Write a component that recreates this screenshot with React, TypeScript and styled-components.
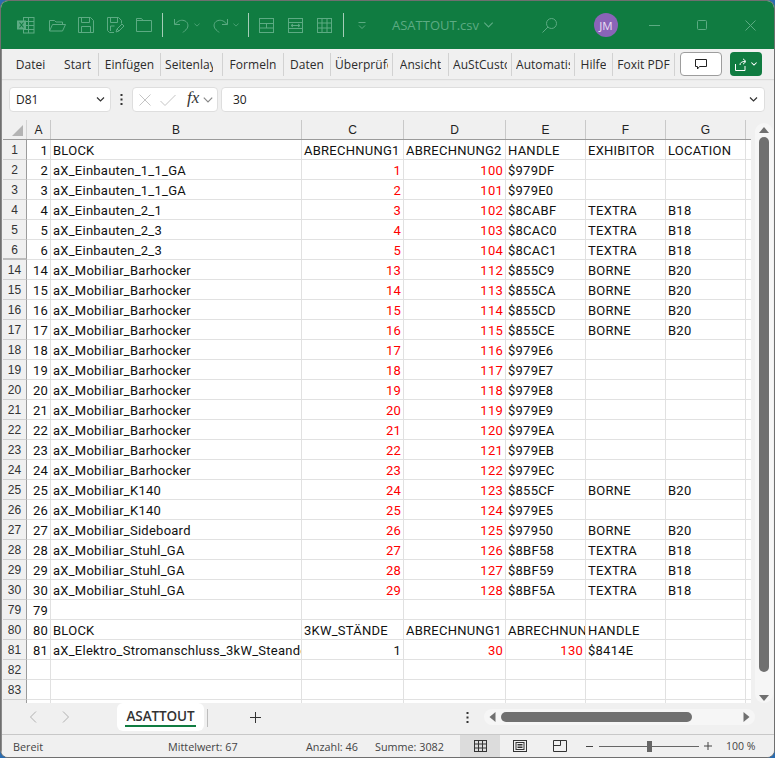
import React from "react";
import styled, { createGlobalStyle } from "styled-components";

const Global = createGlobalStyle`
  html, body { margin: 0; padding: 0; width: 775px; height: 758px; overflow: hidden; background: #2a6cb0; }
  * { box-sizing: border-box; }
`;

const Window = styled.div`
  width: 775px; height: 758px; display: flex; flex-direction: column; overflow: hidden; position: relative;
  background: #f0f0f0; border: 1px solid #6f6f6f; border-radius: 8px;
  font-family: "Open Sans", "Noto Sans", sans-serif; color: #222;
  &::after { content: ""; position: absolute; left: 0; top: 48px; bottom: 0; width: 1px; background: #8a8a8a; }
`;
const TitleBar = styled.div`
  height: 48px; flex: none; background: #107c41; display: flex; align-items: center; padding-left: 16px; position: relative;
`;
const Qat = styled.div`display: flex; align-items: center; color: #5cab83;`;
const QatSlot = styled.div<{ $w: number; $l?: number }>`
  width: ${p => p.$w}px; padding-left: ${p => p.$l ?? 0}px; display: flex; align-items: center; justify-content: flex-start;
`;
const QatSep = styled.div<{ $m?: number }>`width: 1px; height: 24px; background: #a5cdb8; margin-right: ${p => p.$m ?? 11}px;`;
const FileName = styled.div`
  font-size: 13px; color: #5cab83; margin-left: 23px; display: flex; align-items: center; gap: 4px; white-space: nowrap;
`;
const TitleRight = styled.div`margin-left: auto; display: flex; align-items: center; color: #5cab83; height: 100%;`;
const Avatar = styled.div`
  width: 24px; height: 24px; border-radius: 50%; background: #8a64b8; color: #e8dff3; font-size: 11.5px;
  display: flex; align-items: center; justify-content: center; margin: 0 12px 0 37px;
`;
const WinBtn = styled.div`width: 48px; display: flex; justify-content: center; align-items: center;`;

const RibbonBar = styled.div`
  height: 30px; flex: none; background: #f0f0f0; display: flex; align-items: center; padding-left: 3px;
  box-shadow: 0 1px 1px #dcdcdc; position: relative;
`;
const RibTab = styled.div<{ $w: number; $sep?: boolean }>`
  width: ${p => p.$w}px; height: 23px; flex: none; font-size: 12px; line-height: 23px; white-space: nowrap;
  border-right: ${p => (p.$sep ? "1px solid #d2d2d2" : "none")}; padding: 0 4px; color: #2b2b2b;
  display: flex; justify-content: center; letter-spacing: .05px;
`;
const RibLabel = styled.span<{ $clip?: number }>`
  display: block; overflow: hidden; flex: none; ${p => (p.$clip ? `width: ${p.$clip}px; margin-right: auto;` : "")}
`;
const CommentBtn = styled.div`
  width: 42px; height: 24px; margin-left: 5px; background: #fff; border: 1px solid #9d9d9d; border-radius: 4px;
  display: flex; align-items: center; justify-content: center; color: #222;
`;
const ShareBtn = styled.div`
  width: 32px; height: 24px; margin-left: 8px; background: #107c41; border-radius: 4px; color: #fff;
  display: flex; align-items: center; justify-content: center; gap: 3px;
`;

const FormulaBar = styled.div`
  height: 41px; flex: none; background: #f0f0f0; display: flex; align-items: center; padding: 0 9px 0 8px;
`;
const Box = styled.div`
  height: 25px; background: #fff; border: 1px solid #dedede; border-radius: 4px; display: flex; align-items: center;
`;
const NameBox = styled(Box)`width: 102px; padding: 0 5px 0 6px; justify-content: space-between; font-size: 12px; color: #222;`;
const Dots = styled.div`width: 21px; display: flex; justify-content: center; color: #333;`;
const FnBox = styled(Box)`width: 86px; padding: 0 2px 0 6px; gap: 9px; color: #c4c4c4;`;
const Fx = styled.span`font-family: "Liberation Serif", serif; font-style: italic; font-size: 17px; color: #333; margin-left: 2px; margin-top: -3px; margin-right: -5px;`;
const ValueBox = styled(Box)`flex: 1; margin-left: 3px; padding: 0 6px 0 11px; justify-content: space-between; font-size: 12px; color: #222;`;

const SheetArea = styled.div`flex: 1; min-height: 0; display: flex; background: #fff;`;
const GridWrap = styled.div`flex: 1; min-width: 0; overflow: hidden; padding-left: 2px; background: linear-gradient(90deg,#f0f0f0 2px,#fff 2px);`;
const HeaderRow = styled.div`display: flex; height: 20px; background: #f0f0f0; border-bottom: 1px solid #9b9b9b;`;
const Corner = styled.div`
  width: 24px; flex: none; border-right: 1px solid #d4d4d4; display: flex; align-items: flex-end; justify-content: flex-end; padding: 0 3px 3px 0;
`;
const ColHead = styled.div<{ $w: number }>`
  width: ${p => p.$w}px; flex: none; text-align: center; border-right: 1px solid #c9c9c9; font: 12px/20px "Liberation Sans", sans-serif; color: #222;
`;
const Row = styled.div`display: flex; height: 20px;`;
const RowHead = styled.div<{ $thick?: boolean }>`
  width: 24px; flex: none; background: #f0f0f0; text-align: center; font: 12px/21px "Liberation Sans", sans-serif; color: #333;
  border-right: 1px solid #9b9b9b; border-bottom: ${p => (p.$thick ? "2px solid #bdbdbd" : "1px solid #d0d0d0")};
`;
const Cell = styled.div<{ $w: number; $right?: boolean; $red?: boolean }>`
  width: ${p => p.$w}px; flex: none; overflow: hidden; white-space: nowrap; padding: 0 2px 0 2px;
  font: 13px/21px "Roboto", sans-serif; letter-spacing: .25px;
  text-align: ${p => (p.$right ? "right" : "left")}; color: ${p => (p.$red ? "#ff0000" : "#111")};
  border-right: 1px solid #e1e1e1; border-bottom: 1px solid #e1e1e1;
`;

const VScroll = styled.div`
  width: 23px; flex: none; background: #f0f0f0; display: flex; flex-direction: column; align-items: center; padding: 3px 0 0 2px;
`;
const VTrack = styled.div`
  width: 18px; height: 580px; background: #f6f6f6; border-radius: 9px; display: flex; flex-direction: column; align-items: center; padding-top: 4px;
`;
const VThumb = styled.div`width: 10px; height: 535px; margin-top: 4px; background: #707070; border-radius: 5px; flex: none;`;
const ArrowSpacer = styled.div`flex: 1;`;

const TabBar = styled.div`height: 32px; flex: none; background: #f0f0f0; display: flex; align-items: flex-start; border-bottom: 1px solid #c8c8c8;`;
const NavArrows = styled.div`width: 116px; height: 28px; padding-left: 28px; display: flex; align-items: center; gap: 25px; color: #b0b0b0;`;
const SheetTab = styled.div`
  width: 87px; height: 28px; background: #fff; border-radius: 6px; font-size: 13.5px; font-weight: 600; color: #333; text-align: center; line-height: 26px; position: relative; letter-spacing: -.1px;
`;
const TabLine = styled.div`position: absolute; left: 8px; right: 8px; bottom: 4px; height: 2px; background: #107c41;`;
const TabSep = styled.div`width: 1px; height: 18px; margin: 6px 0 0 3px; background: #bdbdbd;`;
const PlusWrap = styled.div`width: 97px; height: 28px; padding-left: 42px; display: flex; align-items: center; color: #333;`;
const MoreDots = styled.div`width: 18px; height: 28px; margin-left: 161px; display: flex; align-items: center; color: #333;`;
const HTrack = styled.div`
  width: 271px; height: 16px; margin-top: 6px; background: #f6f6f6; border-radius: 8px; display: flex; align-items: center; padding: 0 4px; color: #707070;
`;
const HThumb = styled.div`width: 191px; height: 10px; margin-left: 5px; background: #707070; border-radius: 5px;`;

const StatusBar = styled.div`height: 22px; flex: none; background: #f0f0f0; display: flex; align-items: center; font-size: 10.8px; color: #444;`;
const StatusText = styled.div<{ $w: number; $l?: number }>`width: ${p => p.$w}px; margin-left: ${p => p.$l ?? 0}px; white-space: nowrap;`;
const ViewBtn = styled.div<{ $on?: boolean }>`
  width: 40px; height: 100%; display: flex; align-items: center; justify-content: center; background: ${p => (p.$on ? "#dcdcdc" : "transparent")}; color: #333;
`;
const Zoom = styled.div`display: flex; align-items: center; margin-left: 6px; color: #444;`;
const Slider = styled.div`width: 100px; height: 1px; background: #666; margin: 0 5px 0 6px; position: relative;`;
const Knob = styled.div`position: absolute; left: 48px; top: -5px; width: 5px; height: 11px; background: #666;`;
const ZoomPct = styled.div`margin-left: 14px; white-space: nowrap; font-size: 10.5px;`;

const S = { fill: "none", stroke: "currentColor", strokeWidth: 1 } as const;
const Ico = ({ w = 16, h = 16, vb, children }: { w?: number; h?: number; vb?: string; children: React.ReactNode }) => (
  <svg width={w} height={h} viewBox={vb ?? `0 0 ${w} ${h}`} {...S} style={{ display: "block" }}>{children}</svg>
);
const Caret = ({ c = "currentColor", w = 8, h = 5, sw = 1 }: { c?: string; w?: number; h?: number; sw?: number }) => (
  <svg width={w} height={h} viewBox="0 0 8 5" fill="none" stroke={c} strokeWidth={sw} style={{ display: "block" }}><path d="M.5.5 4 4 7.5.5" /></svg>
);

const XlIcon = () => (
  <Ico w={18} h={17}>
    <rect x="6.5" y=".5" width="10.5" height="15.5" /><path d="M11.5.5v15.5M6.5 4.5H17M6.5 8.5H17M6.5 12.5H17" />
    <rect x="0" y="3.5" width="9" height="9" fill="#5cab83" stroke="none" />
    <path d="M2.5 5.5 6.5 10.5M6.5 5.5l-4 5" stroke="#107c41" strokeWidth="1.2" />
  </Ico>
);
const OpenIcon = () => (<Ico w={17} h={13}><path d="M.5 12V1.5h5l1.5 1.5h6.5v2.5M.5 12l3-6.5h13l-3 6.5z" /></Ico>);
const SaveIcon = () => (<Ico w={16} h={16}><path d="M.5.5h12l3 3v12H.5zM3.5.5v5h8v-5M3.5 15.500v-6h9v6" /></Ico>);
const SaveEditIcon = () => (<Ico w={17} h={16}><path d="M7 15.500H2.500l-2-2v-13h11l3 3v3M3.500.5v5h7v-5M3.500 14v-5h4" /><path d="M9 15l1-3 5-5 2 2-5 5zM10 12l2 2" /></Ico>);
const FolderIcon = () => (<Ico w={16} h={14}><path d="M.5 13.500V.5h5l1.500 2h8.500v11zM.5 2.500h6.500" /></Ico>);
const UndoIcon = () => (<Ico w={15} h={15}><path d="M.5 1v5.500H6" /><path d="M.8 6.500 4 3.500c3-2 7-1.500 9 1 2 3 .5 6.500-2 8l-2 2" /></Ico>);
const RedoIcon = () => (<Ico w={15} h={15}><path d="M14.500 1v5.500H9" /><path d="M14.200 6.500 11 3.500c-3-2-7-1.500-9 1-2 3-.5 6.500 2 8l2 2" /></Ico>);
const TblA = () => (<Ico w={15} h={15}><rect x=".5" y=".5" width="14" height="14" /><path d="M.5 5.500h14M.5 10h14M7.500 5.500V10" /></Ico>);
const TblB = () => (<Ico w={15} h={15}><rect x=".5" y=".5" width="14" height="14" /><path d="M.5 4.500h14M.5 10.500h14M3 7.500h9M3 7.500l2-1.500M3 7.500l2 1.500M12 7.500l-2-1.500M12 7.500l-2 1.500" /></Ico>);
const TblC = () => (<Ico w={15} h={15}><rect x=".5" y=".5" width="14" height="14" /><path d="M.5 5h14M.5 10h14M5 .5V5M10 .5V5M5 5v5M10 5v5M5 10v4.500M10 10v4.500" /></Ico>);
const Customize = () => (<Ico w={8} h={7}><path d="M.5.5h7M1 3.500l3 3 3-3" /></Ico>);
const Search = () => (<Ico w={15} h={15}><circle cx="9.500" cy="5.500" r="5" /><path d="M6 9 .5 14.500" /></Ico>);

const cols = [24, 251, 102, 102, 80, 80, 80, 12];

type D = [number, string, string, string, string, string, string];
const rows: D[] = [
  [1, "BLOCK", "ABRECHNUNG1", "ABRECHNUNG2", "HANDLE", "EXHIBITOR", "LOCATION"],
  [2, "aX_Einbauten_1_1_GA", "1", "100", "$979DF", "", ""],
  [3, "aX_Einbauten_1_1_GA", "2", "101", "$979E0", "", ""],
  [4, "aX_Einbauten_2_1", "3", "102", "$8CABF", "TEXTRA", "B18"],
  [5, "aX_Einbauten_2_3", "4", "103", "$8CAC0", "TEXTRA", "B18"],
  [6, "aX_Einbauten_2_3", "5", "104", "$8CAC1", "TEXTRA", "B18"],
  [14, "aX_Mobiliar_Barhocker", "13", "112", "$855C9", "BORNE", "B20"],
  [15, "aX_Mobiliar_Barhocker", "14", "113", "$855CA", "BORNE", "B20"],
  [16, "aX_Mobiliar_Barhocker", "15", "114", "$855CD", "BORNE", "B20"],
  [17, "aX_Mobiliar_Barhocker", "16", "115", "$855CE", "BORNE", "B20"],
  [18, "aX_Mobiliar_Barhocker", "17", "116", "$979E6", "", ""],
  [19, "aX_Mobiliar_Barhocker", "18", "117", "$979E7", "", ""],
  [20, "aX_Mobiliar_Barhocker", "19", "118", "$979E8", "", ""],
  [21, "aX_Mobiliar_Barhocker", "20", "119", "$979E9", "", ""],
  [22, "aX_Mobiliar_Barhocker", "21", "120", "$979EA", "", ""],
  [23, "aX_Mobiliar_Barhocker", "22", "121", "$979EB", "", ""],
  [24, "aX_Mobiliar_Barhocker", "23", "122", "$979EC", "", ""],
  [25, "aX_Mobiliar_K140", "24", "123", "$855CF", "BORNE", "B20"],
  [26, "aX_Mobiliar_K140", "25", "124", "$979E5", "", ""],
  [27, "aX_Mobiliar_Sideboard", "26", "125", "$97950", "BORNE", "B20"],
  [28, "aX_Mobiliar_Stuhl_GA", "27", "126", "$8BF58", "TEXTRA", "B18"],
  [29, "aX_Mobiliar_Stuhl_GA", "28", "127", "$8BF59", "TEXTRA", "B18"],
  [30, "aX_Mobiliar_Stuhl_GA", "29", "128", "$8BF5A", "TEXTRA", "B18"],
];

const tabs: [string, number, boolean, number?][] = [
  ["Datei", 53, false], ["Start", 42, true], ["Einfügen", 62, true], ["Seitenlayout", 62, true, 48], ["Formeln", 61, true], ["Daten", 47, true],
  ["Überprüfen", 62, true, 53], ["Ansicht", 56, true], ["AuStCustom", 63, true, 54], ["Automatisieren", 63, true, 54], ["Hilfe", 38, true], ["Foxit PDF", 62, true],
];

export default function App() {
  const w = cols;
  return (
    <Window>
      <Global />
      <TitleBar>
        <Qat>
          <QatSlot $w={32}><XlIcon /></QatSlot>
          <QatSlot $w={29}><OpenIcon /></QatSlot>
          <QatSlot $w={29}><SaveIcon /></QatSlot>
          <QatSlot $w={29}><SaveEditIcon /></QatSlot>
          <QatSlot $w={26}><FolderIcon /></QatSlot>
          <QatSep />
          <QatSlot $w={20}><UndoIcon /></QatSlot>
          <QatSlot $w={19}><Caret w={6} h={4} /></QatSlot>
          <QatSlot $w={20}><RedoIcon /></QatSlot>
          <QatSlot $w={15}><Caret w={6} h={4} /></QatSlot>
          <QatSep $m={10} />
          <QatSlot $w={29}><TblA /></QatSlot>
          <QatSlot $w={29}><TblB /></QatSlot>
          <QatSlot $w={26}><TblC /></QatSlot>
          <QatSep />
          <QatSlot $w={14} $l={3}><Customize /></QatSlot>
        </Qat>
        <FileName>ASATTOUT.csv <Caret w={11} h={6} /></FileName>
        <TitleRight>
          <Search />
          <Avatar>JM</Avatar>
          <WinBtn><Ico w={11} h={1}><path d="M0 .5h11" /></Ico></WinBtn>
          <WinBtn><Ico w={10} h={10}><rect x=".5" y=".5" width="9" height="9" rx="1" /></Ico></WinBtn>
          <WinBtn><Ico w={11} h={11}><path d="m.5.5 10 10M10.500.5l-10 10" /></Ico></WinBtn>
        </TitleRight>
      </TitleBar>

      <RibbonBar>
        {tabs.map(([t, tw, s, clip]) => <RibTab key={t} $w={tw} $sep={s}><RibLabel $clip={clip}>{t}</RibLabel></RibTab>)}
        <CommentBtn>
          <Ico w={12} h={11}><path d="M.5.5h11v7H4.500L2.500 10V7.500h-2z" /></Ico>
        </CommentBtn>
        <ShareBtn>
          <Ico w={13} h={13}><path d="M.5 6v6.500h9.500V8M5 7c0-2.500 2-3.500 5-3.500M8 .8l3 2.700-3 2.700" /></Ico>
          <Caret w={6} h={4} sw={1.4} />
        </ShareBtn>
      </RibbonBar>

      <FormulaBar>
        <NameBox>D81 <Caret c="#333" w={9} h={5} sw={1.2} /></NameBox>
        <Dots><Ico w={3} h={11}><path d="M1.500 0v2M1.500 4.500v2M1.500 9v2" strokeWidth="2" /></Ico></Dots>
        <FnBox>
          <Ico w={12} h={12}><path d="m.5.5 11 11M11.500.5l-11 11" /></Ico>
          <Ico w={16} h={12}><path d="m.5 7 4.500 4.500L15.500 1" /></Ico>
          <Fx>fx</Fx>
          <Caret c="#888" w={10} h={6} />
        </FnBox>
        <ValueBox>30 <Caret c="#333" w={9} h={5} sw={1.2} /></ValueBox>
      </FormulaBar>

      <SheetArea>
        <GridWrap>
          <HeaderRow>
            <Corner><svg width="11" height="11" viewBox="0 0 11 11" style={{ display: "block" }}><path d="M11 0v11H0z" fill="#b4b4b4" /></svg></Corner>
            {["A", "B", "C", "D", "E", "F", "G"].map((c, i) => <ColHead key={c} $w={w[i]}>{c}</ColHead>)}
            <ColHead $w={w[7]} />
          </HeaderRow>
          {rows.map((r, i) => (
            <Row key={r[0]}>
              <RowHead $thick={r[0] === 6}>{r[0]}</RowHead>
              <Cell $w={w[0]} $right>{r[0]}</Cell>
              <Cell $w={w[1]}>{r[1]}</Cell>
              <Cell $w={w[2]} $right={i > 0} $red={i > 0}>{r[2]}</Cell>
              <Cell $w={w[3]} $right={i > 0} $red={i > 0}>{r[3]}</Cell>
              <Cell $w={w[4]}>{r[4]}</Cell>
              <Cell $w={w[5]}>{r[5]}</Cell>
              <Cell $w={w[6]}>{r[6]}</Cell>
              <Cell $w={w[7]} />
            </Row>
          ))}
          <Row>
            <RowHead>79</RowHead><Cell $w={w[0]} $right>79</Cell>
            <Cell $w={w[1]} /><Cell $w={w[2]} /><Cell $w={w[3]} /><Cell $w={w[4]} /><Cell $w={w[5]} /><Cell $w={w[6]} /><Cell $w={w[7]} />
          </Row>
          <Row>
            <RowHead>80</RowHead><Cell $w={w[0]} $right>80</Cell>
            <Cell $w={w[1]}>BLOCK</Cell><Cell $w={w[2]}>3KW_STÄNDE</Cell><Cell $w={w[3]}>ABRECHNUNG1</Cell><Cell $w={w[4]}>ABRECHNUNG2</Cell><Cell $w={w[5]}>HANDLE</Cell><Cell $w={w[6]} /><Cell $w={w[7]} />
          </Row>
          <Row>
            <RowHead>81</RowHead><Cell $w={w[0]} $right>81</Cell>
            <Cell $w={w[1]}>aX_Elektro_Stromanschluss_3kW_Steanderbau</Cell><Cell $w={w[2]} $right>1</Cell><Cell $w={w[3]} $right $red>30</Cell><Cell $w={w[4]} $right $red>130</Cell><Cell $w={w[5]}>$8414E</Cell><Cell $w={w[6]} /><Cell $w={w[7]} />
          </Row>
          {[82, 83, 84].map(n => (
            <Row key={n}>
              <RowHead>{n === 84 ? "" : n}</RowHead><Cell $w={w[0]} />
              <Cell $w={w[1]} /><Cell $w={w[2]} /><Cell $w={w[3]} /><Cell $w={w[4]} /><Cell $w={w[5]} /><Cell $w={w[6]} /><Cell $w={w[7]} />
            </Row>
          ))}
        </GridWrap>
        <VScroll>
          <VTrack>
            <svg width="10" height="6" viewBox="0 0 10 6" style={{ display: "block", flex: "none" }}><path d="M5 0l5 6H0z" fill="#707070" /></svg>
            <VThumb />
            <ArrowSpacer />
            <svg width="10" height="6" viewBox="0 0 10 6" style={{ display: "block", flex: "none", marginBottom: 2 }}><path d="M5 6l5-6H0z" fill="#707070" /></svg>
          </VTrack>
        </VScroll>
      </SheetArea>

      <TabBar>
        <NavArrows>
          <Ico w={8} h={12}><path d="M7 .5 1.500 6 7 11.500" /></Ico>
          <Ico w={8} h={12}><path d="M1 .5 6.500 6 1 11.500" /></Ico>
        </NavArrows>
        <SheetTab>ASATTOUT<TabLine /></SheetTab>
        <TabSep />
        <PlusWrap><Ico w={11} h={11}><path d="M5.500 0v11M0 5.500h11" /></Ico></PlusWrap>
        <MoreDots><Ico w={3} h={11}><path d="M1.500 0v2M1.500 4.500v2M1.500 9v2" strokeWidth="2" /></Ico></MoreDots>
        <HTrack>
          <svg width="7" height="10" viewBox="0 0 6 10" style={{ display: "block", marginLeft: 1 }}><path d="M0 5l6-5v10z" fill="currentColor" /></svg>
          <HThumb />
          <ArrowSpacer />
          <svg width="7" height="10" viewBox="0 0 6 10" style={{ display: "block", marginRight: 1 }}><path d="M6 5L0 0v10z" fill="currentColor" /></svg>
        </HTrack>
      </TabBar>

      <StatusBar>
        <StatusText $w={155} $l={12}>Bereit</StatusText>
        <StatusText $w={138}>Mittelwert: 67</StatusText>
        <StatusText $w={69}>Anzahl: 46</StatusText>
        <StatusText $w={85}>Summe: 3082</StatusText>
        <ViewBtn $on><Ico w={13} h={12}><rect x=".5" y=".5" width="12" height="11" /><path d="M.5 4h12M.5 8h12M4.500.5v11M8.500.5v11" /></Ico></ViewBtn>
        <ViewBtn><Ico w={14} h={12}><rect x=".5" y=".5" width="13" height="11" /><rect x="3" y="2.500" width="8" height="7" /><path d="M4.500 4.500h5M4.500 6h5M4.500 7.500h5" /></Ico></ViewBtn>
        <ViewBtn><Ico w={14} h={12}><path d="M.5.5h13v11H.5zM7.500.5v5H.5" /></Ico></ViewBtn>
        <Zoom>
          <Ico w={7} h={1}><path d="M0 .5h7" /></Ico>
          <Slider><Knob /></Slider>
          <Ico w={8} h={8}><path d="M4 0v8M0 4h8" /></Ico>
        </Zoom>
        <ZoomPct>100 %</ZoomPct>
      </StatusBar>
    </Window>
  );
}
